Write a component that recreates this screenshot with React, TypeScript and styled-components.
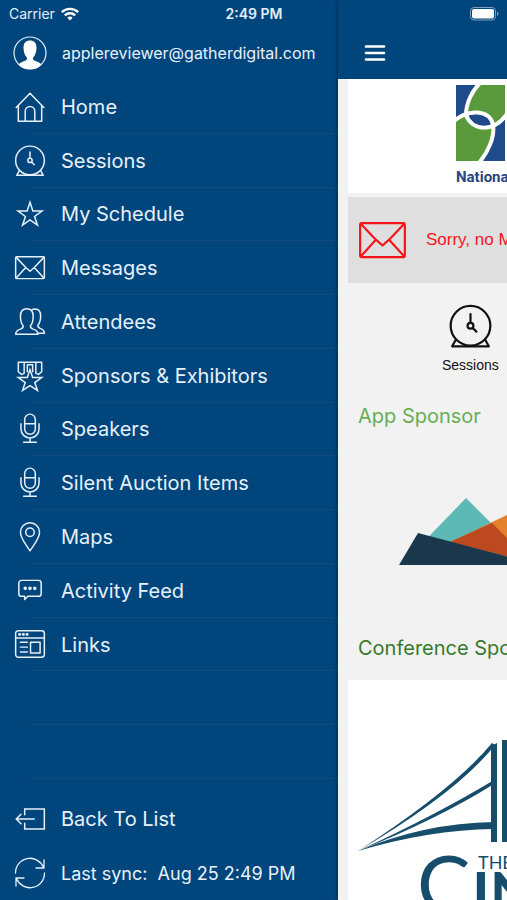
import React from "react";
import styled, { createGlobalStyle } from "styled-components";

const Global = createGlobalStyle`
  *, *::before, *::after { box-sizing: border-box; }
  body { margin: 0; background: #00467d; }
  button, a { font: inherit; color: inherit; }
`;

const ui = `Inter, Roboto, "Liberation Sans", sans-serif`;
const helvetica = `"Liberation Sans", Arial, sans-serif`;
const navy = "#00467d";

const Screen = styled.div`
  position: relative;
  display: grid;
  grid-template-columns: 2fr 1fr;
  height: 100vh;
  overflow: hidden;
  background: ${navy};
  font-family: ${ui};
`;

const StatusBar = styled.header`
  position: absolute;
  inset: 0 0 auto 0;
  z-index: 2;
  display: grid;
  grid-template-columns: 1fr auto 1fr;
  align-items: center;
  height: 27px;
  padding: 0 8px 0 9px;
  color: #e4eef7;
  font-size: 14px;
`;

const Carrier = styled.span`
  display: flex;
  align-items: center;
  gap: 6px;
`;

const Clock = styled.time`
  font-weight: 600;
`;

const Battery = styled.span`
  display: flex;
  justify-content: flex-end;
`;

const Drawer = styled.nav`
  display: flex;
  flex-direction: column;
  min-height: 0;
  padding-top: 26px;
  color: #e6f1fb;
`;

const Glyph = styled.svg`
  flex: none;
  display: block;
  fill: none;
  stroke: currentColor;
  stroke-linecap: round;
  stroke-linejoin: round;
`;

const Account = styled.a`
  display: flex;
  align-items: center;
  gap: 15px;
  height: 54px;
  padding: 0 13px;
  font-size: 16px;
  text-decoration: none;
`;

const MenuList = styled.ul`
  flex: 1;
  display: grid;
  grid-auto-rows: 1fr;
  margin: 0 0 13px;
  padding: 0;
  list-style: none;
`;

const MenuItem = styled.li`
  display: flex;
  min-height: 44px;
  background: linear-gradient(#104a7e, #104a7e) 28px 100% / 100% 1px no-repeat;
`;

const MenuLink = styled.a`
  flex: 1;
  display: flex;
  align-items: center;
  gap: 14px;
  padding: 0 13px;
  font-size: 20px;
  text-decoration: none;
  white-space: nowrap;
`;

const FooterButton = styled.button<{ $small?: boolean }>`
  display: flex;
  align-items: center;
  gap: 14px;
  height: 54px;
  padding: 0 13px;
  border: 0;
  background: none;
  font-size: ${(p) => (p.$small ? 18 : 20)}px;
  text-align: left;
  white-space: pre;
`;

const Page = styled.main`
  z-index: 1;
  display: flex;
  flex-direction: column;
  min-width: 0;
  overflow: hidden;
  background: #f2f2f2;
  box-shadow: 0 0 4px #001c40;
  white-space: nowrap;
`;

const NavBar = styled.div`
  flex: none;
  display: flex;
  height: 79px;
  padding: 26px 0 0 20px;
  background: ${navy};
  color: #fff;
`;

const MenuButton = styled.button`
  display: flex;
  align-items: center;
  padding: 0 6px;
  border: 0;
  background: none;
`;

const Banner = styled.section`
  flex: none;
  height: 114px;
  margin-left: 10px;
  padding: 6px 0 0 108px;
  background: #fff;
`;

const BannerName = styled.div`
  margin-top: 6px;
  color: #27457f;
  font: 700 15px/20px Roboto, sans-serif;
`;

const Notice = styled.section`
  flex: none;
  display: flex;
  align-items: center;
  gap: 17px;
  height: 86px;
  margin: 4px 0 0 10px;
  padding-left: 8px;
  background: #dfdfdf;
  color: #f5141b;
  font: 17px/24px ${helvetica};
`;

const Shortcut = styled.a`
  flex: none;
  align-self: flex-start;
  display: flex;
  flex-direction: column;
  align-items: center;
  gap: 5px;
  margin: 20px 0 27px 104px;
  color: #111;
  font: 14px/20px ${helvetica};
  text-decoration: none;
`;

const Heading = styled.h2<{ $tone: string }>`
  flex: none;
  margin: 0;
  padding: 0 20px;
  color: ${(p) => p.$tone};
  font-size: 20px;
  font-weight: 400;
  line-height: 28px;
`;

const Sponsor = styled.div`
  flex: none;
  height: 204px;
  padding: 68px 0 0 60px;
`;

const Conference = styled.section`
  flex: none;
  height: 280px;
  margin: 18px 0 0 10px;
  padding: 55px 0 0 8px;
  background: #fff;
`;

const Logo = styled.svg`
  display: block;
  overflow: hidden;
  font-family: Lato, sans-serif;
`;

const shapes: Record<string, React.ReactNode> = {
  home: (
    <path d="M2 15.500 15 2l13 13.500M4 14v14.500h22V14M10.500 28V19a4.500 4.500 0 0 1 9 0v9" />
  ),
  clock: (
    <>
      <circle cx="15" cy="14.500" r="13.500" />
      <path d="M5 24 2.500 28.500h25L25 24M15 6.500v6" />
      <circle cx="15" cy="14.500" r="2" />
      <path d="m16.500 16 2.500 2.500" />
    </>
  ),
  star: (
    <path
      strokeLinejoin="miter"
      d="m15 4 2.700 8.200h8.600l-7 5.100 2.700 8.200-7-5-7 5 2.700-8.200-7-5.100h8.600z"
    />
  ),
  envelope: (
    <>
      <rect x="1.500" y="4.500" width="27" height="20.500" rx="1" />
      <path d="M2 5l9 9.500L15 18l4-3.500L28 5M2 24.500l9-10M28 24.500l-9-10" />
    </>
  ),
  people: (
    <>
      <path d="M1.500 26.500c0-3 2-4 4.500-4.800 2.200-.8 3-1.700 2.500-3.200C6.500 16 6 13.500 6 9.500 6 5 8.500 2.500 12 2.500S18 5 18 9.500c0 4-.5 6.500-2.500 9-.5 1.500.3 2.400 2.500 3.200 2.500.8 4.500 1.800 4.500 4.800z" />
      <path d="M16.500 4c1-.9 2-1.200 3.200-1.200 3.300 0 5.300 2.200 5.300 6.500 0 4-.7 6.400-2.400 8.500-.5 1.500.2 2.400 2 3.200 2.300.9 4 2 4 4.500h-5.500" />
    </>
  ),
  medal: (
    <>
      <path
        strokeLinejoin="miter"
        d="m15 9 2.500 7.500H26l-6.500 4.700 2.500 7.300-7-4.500-7 4.500 2.500-7.300L4 16.500h8.500z"
      />
      <path d="M4 2h5.500v10.500L7 13.500l-3-2.500zM9.500 2h11M12.500 11V4.500h5V11M20.500 2H26v9l-3 2.500-2.500-1z" />
    </>
  ),
  mic: (
    <>
      <rect x="10" y="1" width="10" height="19" rx="5" />
      <path d="M10 10h10M6.500 10v5a8.500 8.500 0 0 0 17 0v-5M15 23.500V27M9 27.500h12" />
    </>
  ),
  pin: (
    <>
      <path d="M15 28C10 20.500 6 16 6 10.500a9 9 0 0 1 18 0c0 5.500-4 10-9 17.500z" />
      <circle cx="15" cy="10.500" r="4" />
    </>
  ),
  chat: (
    <>
      <path d="M7 5h16a2.500 2.500 0 0 1 2.500 2.500v10A2.500 2.500 0 0 1 23 20H13l-3 3v-3H7a2.500 2.500 0 0 1-2.500-2.500v-10A2.500 2.500 0 0 1 7 5z" />
      <g fill="currentColor">
        <circle cx="10.500" cy="12.500" r="1" />
        <circle cx="15" cy="12.500" r="1" />
        <circle cx="19.500" cy="12.500" r="1" />
      </g>
    </>
  ),
  browser: (
    <>
      <rect x="1.500" y="1.500" width="27" height="25" rx="2.500" />
      <path d="M2 8.500h26M6 12.500h6.500M6 17h6.500M6 21.500h6.500M15.500 12.500h9v10h-9z" />
      <path strokeWidth="2.400" d="M5 5h.5M8.500 5h.5M12 5h.5" />
    </>
  ),
  exit: (
    <path
      strokeLinejoin="miter"
      d="M10 11V5.500h18.500v19H10V19M19 15H2M6.500 10.500 2 15l4.500 4.500"
    />
  ),
};

const Icon = ({ name, size = 34, weight = 1.4 }: { name: string; size?: number; weight?: number }) => (
  <Glyph width={size} height={size} viewBox="-1 -1 32 32" strokeWidth={weight} aria-hidden="true">
    {shapes[name]}
  </Glyph>
);

const items = [
  ["Home", "home"],
  ["Sessions", "clock"],
  ["My Schedule", "star"],
  ["Messages", "envelope"],
  ["Attendees", "people"],
  ["Sponsors & Exhibitors", "medal"],
  ["Speakers", "mic"],
  ["Silent Auction Items", "mic"],
  ["Maps", "pin"],
  ["Activity Feed", "chat"],
  ["Links", "browser"],
];

export default function App() {
  return (
    <>
      <Global />
      <Screen>
        <StatusBar>
          <Carrier>
            Carrier
            <svg width="18" height="14" viewBox="0 0 18 14" fill="none" stroke="#fff" strokeWidth="2.400" aria-hidden="true">
              <path d="M.8 5.200a11.800 11.800 0 0 1 16.400 0M3.800 8.400a7.500 7.500 0 0 1 10.400 0" />
              <path d="m9 13.500-2.700-2.700a3.900 3.900 0 0 1 5.400 0z" fill="#fff" stroke="none" />
            </svg>
          </Carrier>
          <Clock>2:49 PM</Clock>
          <Battery>
            <svg width="29" height="14" viewBox="0 0 29 14" aria-label="Battery full">
              <rect x=".5" y=".5" width="25" height="12.500" rx="3.500" fill="none" stroke="#7f9fbd" />
              <rect x="2" y="2" width="22" height="9.500" rx="2" fill="#fff" />
              <path d="M27 4.500c2 .8 2 3.700 0 4.500z" fill="#7f9fbd" />
            </svg>
          </Battery>
        </StatusBar>

        <Drawer aria-label="Main menu">
          <Account href="#profile">
            <Glyph width="34" height="34" viewBox="0 0 34 34" aria-hidden="true">
              <circle cx="17" cy="17" r="16" strokeWidth="1.200" />
              <path
                fill="#fff"
                stroke="none"
                d="M5.500 28.500c1.500-2 4-2.800 6.500-3.700 2-.8 2.300-1.800 1.800-3.300-2.300-2.500-3.300-6-3.300-10C10.500 7 13 4.500 17 4.500s6.500 2.500 6.500 7c0 4-1 7.500-3.300 10-.5 1.500-.2 2.500 1.800 3.300 2.500.9 5 1.700 6.500 3.700A16.300 16.300 0 0 1 5.500 28.500z"
              />
            </Glyph>
            applereviewer@gatherdigital.com
          </Account>
          <MenuList>
            {items.map(([label, icon]) => (
              <MenuItem key={label}>
                <MenuLink href="#">
                  <Icon name={icon} />
                  {label}
                </MenuLink>
              </MenuItem>
            ))}
            <MenuItem aria-hidden="true" />
            <MenuItem aria-hidden="true" />
          </MenuList>
          <FooterButton>
            <Icon name="exit" />
            Back To List
          </FooterButton>
          <FooterButton $small>
            <Glyph width="34" height="34" viewBox="0 0 34 34" strokeWidth="1.300" aria-hidden="true">
              <path d="M2.500 17A14.500 14.500 0 0 1 30.500 11.500M31 4v8h-8M31.500 17A14.500 14.500 0 0 1 3.500 22.500M3 30v-8h8" />
            </Glyph>
            {"Last sync:  Aug 25 2:49 PM"}
          </FooterButton>
        </Drawer>

        <Page>
          <NavBar>
            <MenuButton aria-label="Menu">
              <Glyph width="22" height="18" viewBox="0 0 22 18" strokeWidth="2.600">
                <path d="M2 2.500h18M2 9h18M2 15.500h18" />
              </Glyph>
            </MenuButton>
          </NavBar>
          <Banner>
            <Logo width="49" height="76" viewBox="0 0 49 76" aria-hidden="true">
              <path fill="#1f4b8a" d="M0 0h49v76H0z" />
              <path fill="#5b9a3c" d="M22 0C15 8 10 19 10 30c10-6 24-3 28 10 5-2 8-6 11-10V0z" />
              <path fill="#5b9a3c" d="M0 35l10-6c3 12 14 18 28 13 2 14-6 26-14 34H0z" />
              <g fill="none" stroke="#fff" strokeWidth="4">
                <path d="M24-2C16 6 10 18 10 30c6 16 28 18 41-1" />
                <path d="M-2 36c14-12 36-12 39 4 2 12-5 27-14 38" />
              </g>
            </Logo>
            <BannerName>National</BannerName>
          </Banner>
          <Notice>
            <Icon name="envelope" size={53} weight={1.3} />
            Sorry, no Messages
          </Notice>
          <Shortcut href="#sessions">
            <Icon name="clock" size={47} weight={1.5} />
            Sessions
          </Shortcut>
          <Heading $tone="#68ad57">App Sponsor</Heading>
          <Sponsor>
            <Logo width="200" height="67" viewBox="0 0 200 67" aria-hidden="true">
              <path fill="#5cb9b6" d="m68 0 58 58H12z" />
              <path fill="#e2812b" d="m52 44 61-29 60 45z" />
              <path fill="#bd4921" d="m52 44 42-19 40 40z" />
              <path fill="#1b374b" d="M20 35 1 67h140z" />
            </Logo>
          </Sponsor>
          <Heading $tone="#39792a">Conference Sponsors</Heading>
          <Conference>
            <Logo width="260" height="200" viewBox="0 0 260 200" fill="#164d6b" aria-label="Conference sponsor">
              <path d="M135 11l6-3v99h-6zM146 5h60v102h-60z" />
              <path d="M2 116Q98 54 136 8l3 2Q102 57 2 116z" />
              <path d="M2 116Q80 80 138 45v4Q82 84 2 116z" />
              <path d="M2 116Q68 88 138 87v7Q72 95 2 116z" />
              <text x="122" y="134" fontSize="18">THE</text>
              <text x="61" y="178" fontSize="80">C</text>
              <text x="116" y="180" fontSize="60" fontWeight="700">IN</text>
            </Logo>
          </Conference>
        </Page>
      </Screen>
    </>
  );
}
